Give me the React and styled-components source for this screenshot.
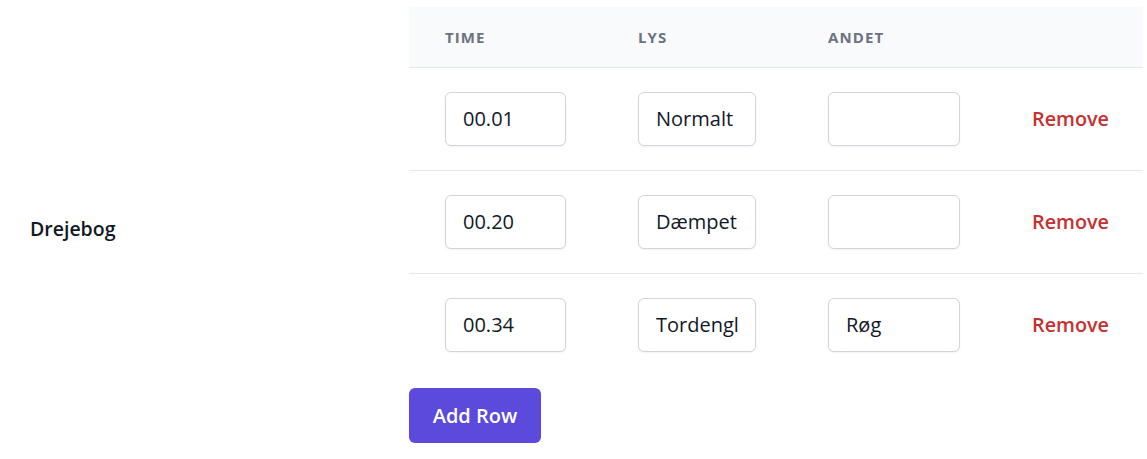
import { useState } from "react";
import styled, { createGlobalStyle } from "styled-components";

const GlobalStyle = createGlobalStyle`
    body {
        margin: 0;
        background: #ffffff;
        font-family: "Open Sans", "Noto Sans", sans-serif;
        color: #111827;
    }
`;

const Page = styled.div`
    display: flex;
    align-items: center;
    padding: 7px 4px 16px 30px;
`;

const Label = styled.div`
    width: 379px;
    flex-shrink: 0;
    font-size: 19.5px;
    font-weight: 600;
    color: #111827;
    padding-top: 8px;
`;

const Content = styled.div`
    width: 734px;
`;

const Table = styled.table`
    width: 734px;
    border-collapse: collapse;
    table-layout: fixed;
`;

const HeadCell = styled.th`
    width: ${(p) => p.$w}px;
    height: 60px;
    padding: 0 36px;
    background: #f9fafb;
    border-bottom: 1px solid #e5e7eb;
    text-align: left;
    font-size: 15px;
    font-weight: 700;
    letter-spacing: 1.1px;
    color: #6b7280;
    box-sizing: border-box;
`;

const Row = styled.tr`
    border-bottom: 1px solid #e5e7eb;
    &:last-child {
        border-bottom: none;
    }
`;

const Cell = styled.td`
    padding: 24px 36px;
`;

const Input = styled.input`
    display: block;
    width: 100%;
    height: 54px;
    box-sizing: border-box;
    padding: 0 17px;
    border: 1px solid #d1d5db;
    border-radius: 6px;
    box-shadow: 0 1px 2px rgba(0, 0, 0, 0.05);
    font-family: inherit;
    font-size: 20px;
    color: #111827;
    background: #fff;
    outline: none;
`;

const RemoveButton = styled.button`
    border: none;
    background: none;
    padding: 0;
    font-family: inherit;
    font-size: 19.8px;
    font-weight: 600;
    color: #c53030;
    cursor: pointer;
`;

const AddButton = styled.button`
    margin-top: 12px;
    width: 132px;
    height: 55px;
    border: none;
    border-radius: 6px;
    background: #5b4adc;
    color: #ffffff;
    font-family: inherit;
    font-size: 20px;
    font-weight: 600;
    cursor: pointer;
`;

const columns = [
    { key: "time", label: "TIME", w: 193 },
    { key: "lys", label: "LYS", w: 190 },
    { key: "andet", label: "ANDET", w: 204 },
];

const initialRows = [
    { time: "00.01", lys: "Normalt", andet: "" },
    { time: "00.20", lys: "Dæmpet", andet: "" },
    { time: "00.34", lys: "Tordenglimt", andet: "Røg" },
];

const App = () => {
    const [rows, setRows] = useState(initialRows);

    const update = (i, key, value) => {
        setRows(rows.map((r, idx) => (idx === i ? { ...r, [key]: value } : r)));
    };

    return (
        <>
            <GlobalStyle />
            <Page>
                <Label>Drejebog</Label>
                <Content>
                    <Table>
                        <thead>
                            <tr>
                                {columns.map((c) => (
                                    <HeadCell key={c.key} $w={c.w}>{c.label}</HeadCell>
                                ))}
                                <HeadCell $w={147} />
                            </tr>
                        </thead>
                        <tbody>
                            {rows.map((r, i) => (
                                <Row key={i}>
                                    {columns.map((c) => (
                                        <Cell key={c.key}>
                                            <Input
                                                value={r[c.key]}
                                                onChange={(e) => update(i, c.key, e.target.value)}
                                            />
                                        </Cell>
                                    ))}
                                    <Cell>
                                        <RemoveButton onClick={() => setRows(rows.filter((_, idx) => idx !== i))}>
                                            Remove
                                        </RemoveButton>
                                    </Cell>
                                </Row>
                            ))}
                        </tbody>
                    </Table>
                    <AddButton onClick={() => setRows([...rows, { time: "", lys: "", andet: "" }])}>
                        Add Row
                    </AddButton>
                </Content>
            </Page>
        </>
    );
};

export default App;
